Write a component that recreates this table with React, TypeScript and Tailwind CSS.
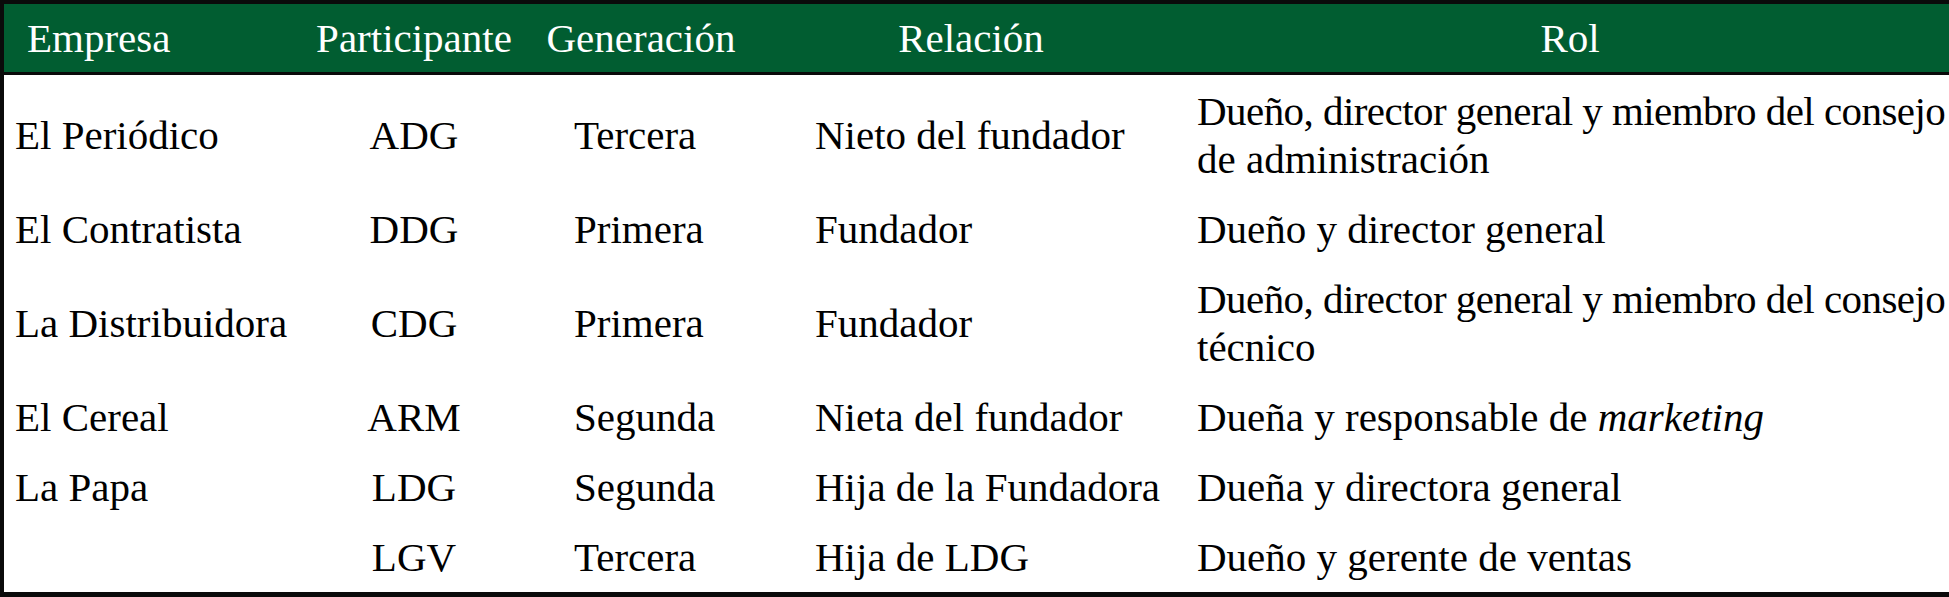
import React from "react";

const Long = ({ children }: { children: React.ReactNode }) => (
  <span className="tracking-[-0.55px]">{children}</span>
);

const rows: { h: string; empresa: string; part: string; gen: string; rel: string; rol: React.ReactNode }[] = [
  { h: "h-[119px]", empresa: "El Periódico", part: "ADG", gen: "Tercera", rel: "Nieto del fundador", rol: <><Long>Dueño, director general y miembro del consejo</Long><br />de administración</> },
  { h: "h-[70px]", empresa: "El Contratista", part: "DDG", gen: "Primera", rel: "Fundador", rol: "Dueño y director general" },
  { h: "h-[118px]", empresa: "La Distribuidora", part: "CDG", gen: "Primera", rel: "Fundador", rol: <><Long>Dueño, director general y miembro del consejo</Long><br />técnico</> },
  { h: "h-[70px]", empresa: "El Cereal", part: "ARM", gen: "Segunda", rel: "Nieta del fundador", rol: <>Dueña y responsable de <i>marketing</i></> },
  { h: "h-[70px]", empresa: "La Papa", part: "LDG", gen: "Segunda", rel: "Hija de la Fundadora", rol: "Dueña y directora general" },
  { h: "h-[70px]", empresa: "", part: "LGV", gen: "Tercera", rel: "Hija de LDG", rol: "Dueño y gerente de ventas" },
];

export default function App() {
  return (
    <div className="w-[1949px] h-[597px] overflow-hidden bg-white font-['Liberation_Serif','Times_New_Roman',serif]">
      <div className="w-[1964px] border-l-4 border-t-4 border-b-[5px] border-[#0a0a0a] text-[41px] leading-[48px] text-black whitespace-nowrap">
        <div className="grid grid-cols-[300px_220px_234px_426px_780px] h-[71px] bg-[#015d31] border-b-[3px] border-[#0a0a0a] text-white items-center">
          <div className="pl-[23px]">Empresa</div>
          <div className="text-center">Participante</div>
          <div className="text-center">Generación</div>
          <div className="text-center">Relación</div>
          <div className="text-center pr-[8px]">Rol</div>
        </div>
        {rows.map((r, i) => (
          <div key={i} className={`grid grid-cols-[300px_220px_234px_426px_780px] items-center ${r.h}`}>
            <div className="pl-[11px]">{r.empresa}</div>
            <div className="text-center">{r.part}</div>
            <div className="pl-[50px]">{r.gen}</div>
            <div className="pl-[57px]">{r.rel}</div>
            <div className="pl-[13px]">{r.rol}</div>
          </div>
        ))}
      </div>
    </div>
  );
}
